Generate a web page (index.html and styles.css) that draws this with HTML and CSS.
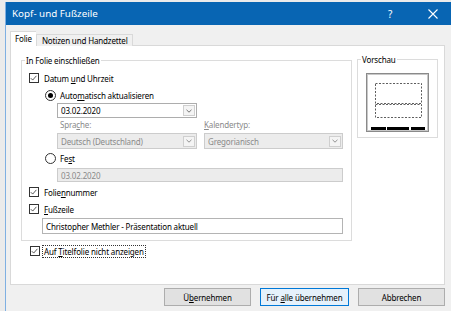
FILE: index.html
```html
<!DOCTYPE html>
<html lang="de">
<head>
<meta charset="utf-8">
<title>Kopf- und Fußzeile</title>
<link rel="stylesheet" href="styles.css">
</head>
<body>
<div class="screen">
  <div class="dialog">
    <div class="titlebar">
      <span class="title">Kopf- und Fußzeile</span>
      <span class="help">?</span>
      <span class="close"><svg width="10" height="10" viewBox="0 0 10 10"><path d="M0.5 0.5L9.5 9.5M9.5 0.5L0.5 9.5" stroke="#fff" stroke-width="1.1" fill="none"/></svg></span>
    </div>
    <div class="body">
      <div class="tabs">
        <div class="tab active">Folie</div>
        <div class="tab">Notizen und Handzettel</div>
      </div>
      <div class="panel">
        <div class="toprow">
          <div class="group main">
            <span class="legend">In Folie einschließen</span>
            <div class="row check r1">
              <span class="cb"><svg width="10" height="10" viewBox="0 0 10 10"><path d="M2 5.2L4.1 7.3L8.2 2.6" stroke="#333" stroke-width="0.9" fill="none"/></svg></span>
              <span>Datum <u>u</u>nd Uhrzeit</span>
            </div>
            <div class="row radio r2">
              <span class="rb on"></span>
              <span>Auto<u>m</u>atisch aktualisieren</span>
            </div>
            <div class="combo date r3">
              <span class="val">03.02.2020</span>
              <span class="arrow"><svg width="6" height="4" viewBox="0 0 6 4"><path d="M0.5 0.8L3 3.2L5.5 0.8" stroke="#555" stroke-width="0.8" fill="none"/></svg></span>
            </div>
            <div class="labels r4">
              <span class="lbl l1">Spra<u>c</u>he:</span>
              <span class="lbl l2"><u>K</u>alendertyp:</span>
            </div>
            <div class="combos r5">
              <div class="combo dis c1">
                <span class="val">Deutsch (Deutschland)</span>
                <span class="arrow"><svg width="6" height="4" viewBox="0 0 6 4"><path d="M0.5 0.8L3 3.2L5.5 0.8" stroke="#777" stroke-width="0.8" fill="none"/></svg></span>
              </div>
              <div class="combo dis c2">
                <span class="val">Gregorianisch</span>
                <span class="arrow"><svg width="6" height="4" viewBox="0 0 6 4"><path d="M0.5 0.8L3 3.2L5.5 0.8" stroke="#777" stroke-width="0.8" fill="none"/></svg></span>
              </div>
            </div>
            <div class="row radio r6">
              <span class="rb"></span>
              <span>Fe<u>s</u>t</span>
            </div>
            <div class="field dis r7">03.02.2020</div>
            <div class="row check r8">
              <span class="cb"><svg width="10" height="10" viewBox="0 0 10 10"><path d="M2 5.2L4.1 7.3L8.2 2.6" stroke="#333" stroke-width="0.9" fill="none"/></svg></span>
              <span>Folie<u>n</u>nummer</span>
            </div>
            <div class="row check r9">
              <span class="cb"><svg width="10" height="10" viewBox="0 0 10 10"><path d="M2 5.2L4.1 7.3L8.2 2.6" stroke="#333" stroke-width="0.9" fill="none"/></svg></span>
              <span><u>F</u>ußzeile</span>
            </div>
            <div class="field footer r10">Christopher Methler - Präsentation aktuell</div>
          </div>
          <div class="group preview">
            <span class="legend">Vorschau</span>
            <svg class="slide" width="63" height="59" viewBox="0 0 63 59">
              <rect x="0.5" y="0.5" width="62" height="58" fill="#fff" stroke="#8a8a8a"/>
              <rect x="1.5" y="1.5" width="60" height="56" fill="none" stroke="#c8c8c8"/>
              <rect x="9.5" y="10.5" width="46" height="20" fill="none" stroke="#333" stroke-width="0.8" stroke-dasharray="2 1.5"/>
              <rect x="9.5" y="31.5" width="46" height="13" fill="none" stroke="#333" stroke-width="0.8" stroke-dasharray="2 1.5"/>
              <rect x="5" y="54" width="15" height="3" fill="#000"/>
              <rect x="21" y="54" width="22" height="3" fill="#000"/>
              <rect x="45" y="54" width="14" height="3" fill="#000"/>
            </svg>
          </div>
        </div>
        <div class="row check titlecheck">
          <span class="cb"><svg width="10" height="10" viewBox="0 0 10 10"><path d="M2 5.2L4.1 7.3L8.2 2.6" stroke="#333" stroke-width="0.9" fill="none"/></svg></span>
          <span class="focus">Auf <u>T</u>itelfolie nicht anzeigen</span>
        </div>
      </div>
      <div class="buttons">
        <button class="btn b1">Ü<u>b</u>ernehmen</button>
        <button class="btn b2 default">Für <u>a</u>lle übernehmen</button>
        <button class="btn b3">Abbrechen</button>
      </div>
    </div>
  </div>
</div>
</body>
</html>
```
FILE: styles.css
```css
html, body {
  margin: 0;
  padding: 0;
}
body {
  width: 451px;
  height: 311px;
  overflow: hidden;
  background: #ebebeb;
  font-family: "Noto Sans", "Open Sans", sans-serif;
  font-size: 8px;
  letter-spacing: -0.15px;
  color: #000;
}
u { text-decoration: underline; text-underline-offset: 1px; text-decoration-thickness: 0.7px; }
.screen {
  width: 451px;
  height: 311px;
  padding-top: 2px;
  box-sizing: border-box;
}
.dialog {
  margin-left: 5px;
  width: 446px;
  height: 309px;
  border-left: 1px solid #7fb0e2;
  background: #f0f0f0;
}
.titlebar {
  height: 23px;
  background: #0865b3;
  color: #fff;
  display: flex;
  align-items: center;
  padding-left: 6px;
  font-size: 9.8px;
  letter-spacing: 0;
}
.title { flex: 1; }
.help { width: 10px; margin-right: 30px; font-size: 10px; }
.close { width: 10px; height: 10px; margin-right: 14px; display: flex; }
.body {
  padding-left: 4px;
}
.tabs {
  display: flex;
  align-items: flex-end;
  height: 14px;
  margin-top: 7px;
  position: relative;
  z-index: 1;
}
.tab {
  height: 11px;
  line-height: 11px;
  padding: 0 4px 0 5px;
  border: 1px solid #d9d9d9;
  border-bottom: none;
  background: #f0f0f0;
}
.tab.active {
  height: 14px;
  line-height: 13px;
  padding: 0 4px 0 4px;
  background: #fff;
  border-right: none;
}
.panel {
  background: #fff;
  border: 1px solid #d9d9d9;
  margin-top: -1px;
  padding-left: 10px;
  box-sizing: border-box;
  width: 435px;
  height: 240px;
}
.toprow {
  display: flex;
  gap: 5px;
  padding-top: 14px;
  align-items: flex-start;
}
.group {
  position: relative;
  border: 1px solid #dcdcdc;
  box-sizing: border-box;
}
.legend {
  position: absolute;
  top: -6px;
  left: 3px;
  padding: 0 1px;
  background: #fff;
  line-height: 11px;
}
.main {
  width: 331px;
  height: 181px;
}
.preview {
  width: 81px;
  height: 79px;
  margin-top: -1px;
}
.slide {
  display: block;
  margin: 13px 0 0 8px;
}
.row {
  display: flex;
  align-items: center;
  height: 12px;
}
.cb {
  width: 10px;
  height: 10px;
  border: 1px solid #333;
  box-sizing: border-box;
  background: #fff;
  display: flex;
  margin-right: 5px;
}
.cb svg { margin: -1px 0 0 -1px; }
.rb {
  width: 11px;
  height: 11px;
  border: 1px solid #333;
  border-radius: 50%;
  box-sizing: border-box;
  background: #fff;
  margin-right: 4px;
  position: relative;
}
.rb.on::after {
  content: "";
  position: absolute;
  left: 2px; top: 2px;
  width: 5px; height: 5px;
  border-radius: 50%;
  background: #000;
}
.check { margin-left: 7px; }
.radio { margin-left: 23px; }
.r1 { margin-top: 11px; }
.r2 { margin-top: 5px; }
.combo {
  display: flex;
  align-items: center;
  height: 15px;
  border: 1px solid #adadad;
  box-sizing: border-box;
  background: #fff;
  padding-left: 3px;
}
.combo .val { flex: 1; white-space: nowrap; overflow: hidden; }
.combo .arrow {
  width: 12px;
  height: 11px;
  margin-right: 1px;
  border: 1px solid #cfcfcf;
  box-sizing: border-box;
  background: #f4f4f4;
  display: flex;
  align-items: center;
  justify-content: center;
}
.date {
  margin: 2px 0 0 35px;
  width: 140px;
}
.labels {
  display: flex;
  height: 11px;
  margin-top: 1px;
  color: #8a8a8a;
  line-height: 11px;
}
.l1 { margin-left: 38px; width: 144px; }
.combos {
  display: flex;
  gap: 7px;
  margin: 3px 0 0 35px;
}
.combos .combo { height: 16px; }
.combo.dis {
  background: #ececec;
  border-color: #cccccc;
  color: #8a8a8a;
}
.c1 { width: 140px; }
.c2 { width: 139px; }
.r6 { margin-top: 3px; }
.field {
  box-sizing: border-box;
  border: 1px solid #adadad;
  padding-left: 3px;
  display: flex;
  align-items: center;
}
.field.dis {
  margin: 4px 0 0 35px;
  width: 286px;
  height: 14px;
  background: #ececec;
  border-color: #cccccc;
  color: #8a8a8a;
}
.r8 { margin-top: 4px; }
.r9 { margin-top: 5px; }
.footer {
  margin: 3px 0 0 20px;
  width: 301px;
  height: 16px;
  background: #fff;
  border-color: #b4b4b4;
}
.titlecheck {
  margin: 4px 0 0 9px;
}
.titlecheck .cb { margin-right: 3px; }
.focus {
  outline: 1px dotted #333;
  outline-offset: 0;
  padding: 0 1px;
  line-height: 11px;
}
.buttons {
  display: flex;
  justify-content: flex-end;
  gap: 9px;
  margin-top: 3px;
  width: 435px;
}
.btn {
  font-family: inherit;
  font-size: 8px;
  letter-spacing: -0.15px;
  height: 18px;
  padding: 0;
  background: #e1e1e1;
  border: 1px solid #adadad;
  color: #000;
  box-sizing: border-box;
  width: 87px;
}
.btn.default {
  border-color: #0078d7;
  background: #e5f1fb;
  width: 89px;
}
```
